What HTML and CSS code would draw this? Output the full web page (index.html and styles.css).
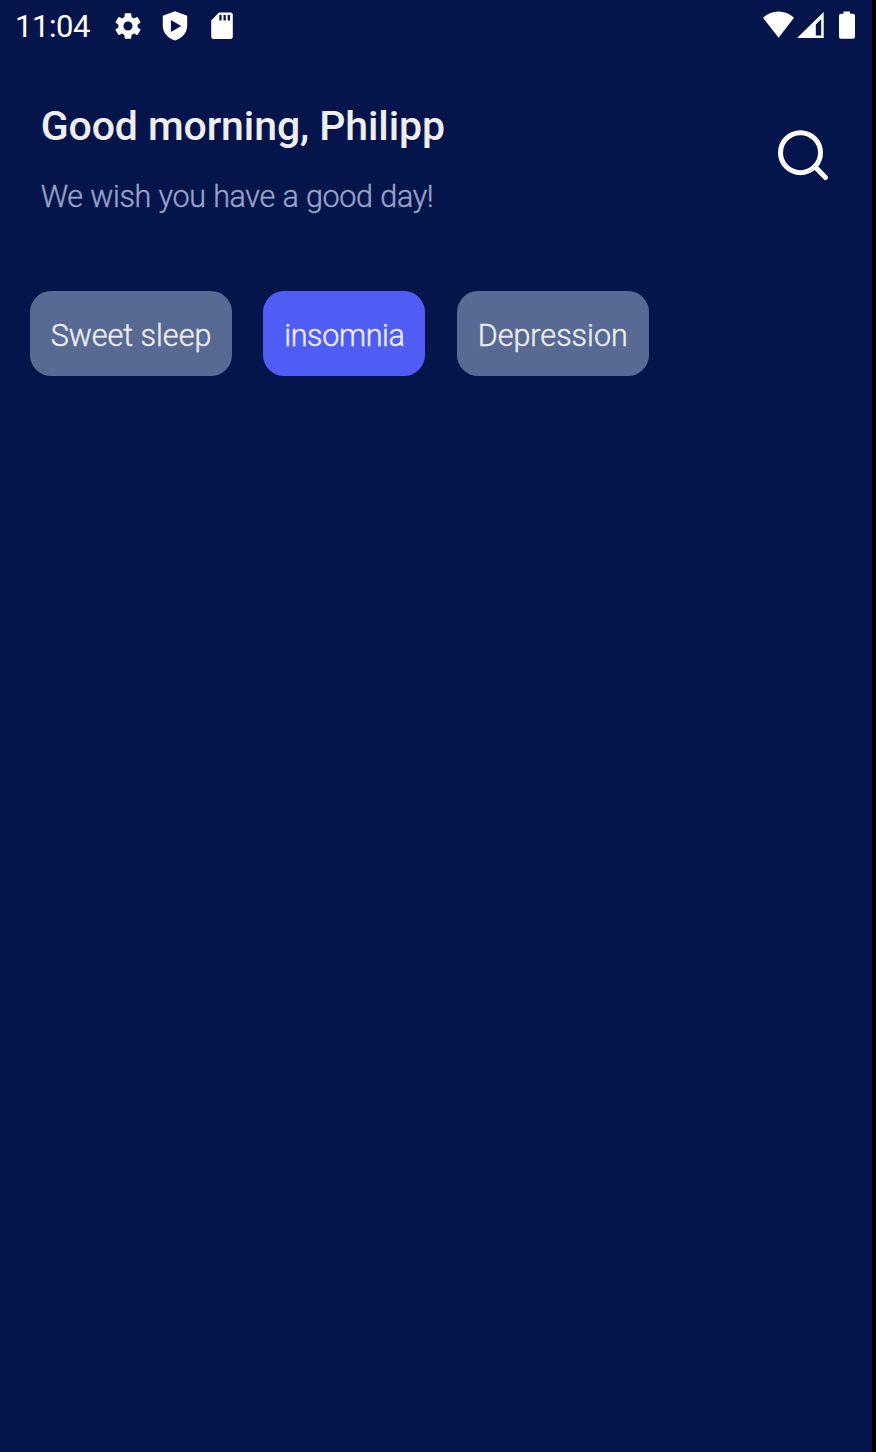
FILE: index.html
```html
<!DOCTYPE html>
<html lang="en">
<head>
<meta charset="utf-8">
<title>Good morning</title>
<link rel="stylesheet" href="styles.css">
</head>
<body>
<main class="screen">
  <div class="status">
    <span class="clock">11:04</span>
    <svg class="gear" width="32" height="32" viewBox="0 0 24 24"><path d="M19.14 12.94c.04-.3.06-.61.06-.94 0-.32-.02-.64-.07-.94l2.03-1.58c.18-.14.23-.41.12-.61l-1.92-3.32c-.12-.22-.37-.29-.59-.22l-2.39.96c-.5-.38-1.03-.7-1.62-.94l-.36-2.54c-.04-.24-.24-.41-.48-.41h-3.84c-.24 0-.43.17-.47.41l-.36 2.54c-.59.24-1.13.57-1.62.94l-2.39-.96c-.22-.08-.47 0-.59.22L2.74 8.87c-.12.21-.08.47.12.61l2.03 1.58c-.05.3-.09.63-.09.94s.02.64.07.94l-2.03 1.58c-.18.14-.23.41-.12.61l1.92 3.32c.12.22.37.29.59.22l2.39-.96c.5.38 1.03.7 1.62.94l.36 2.54c.05.24.24.41.48.41h3.84c.24 0 .44-.17.47-.41l.36-2.54c.59-.24 1.13-.56 1.62-.94l2.39.96c.22.08.47 0 .59-.22l1.92-3.32c.12-.22.07-.47-.12-.61zM12 15.400A3.400 3.400 0 1 1 12 8.600a3.400 3.400 0 0 1 0 6.800z"/></svg>
    <svg class="shield" width="26" height="30" viewBox="0 0 26 30"><path fill-rule="evenodd" d="M13 .2 25.200 4.700v9.800C25.200 22 20 27.500 13 29.500 6 27.500 .8 22 .8 14.500V4.700zM8.900 9v12L19.200 15z"/></svg>
    <svg class="card" width="22" height="28" viewBox="0 0 22 28"><path fill-rule="evenodd" d="M8 .5h11.500A2.300 2.300 0 0 1 21.800 2.800v21.900A2.300 2.300 0 0 1 19.500 27H2.500A2.300 2.300 0 0 1 .2 24.700V8.500zM8.300 3v5.500h2.300V3zm4.200 0v5.500h2.300V3zm4.200 0v5.500H19V3z"/></svg>
    <svg class="signals" width="96" height="30" viewBox="0 0 96 30"><path d="M3 7.800C12-.5 25-.5 34 7.800L18.600 27.800z"/><path fill-rule="evenodd" d="M63.700 1.900v26.100H37zM61.200 9.300l-5.400 5.300v10.800h5.400z"/><path d="M83.500 1.500h6.500v2.200h3a2 2 0 0 1 2 2v21.100a2 2 0 0 1-2 2H81a2 2 0 0 1-2-2V5.700a2 2 0 0 1 2-2h2.500z"/></svg>
  </div>
  <header class="header">
    <div>
      <h1 class="title">Good morning, Philipp</h1>
      <p class="subtitle">We wish you have a good day!</p>
    </div>
    <svg class="search" width="54" height="54" viewBox="0 0 54 54"><circle cx="24.500" cy="24.700" r="20"/><path d="M39 38.700 49.500 49.500"/></svg>
  </header>
  <nav class="chips">
    <span class="chip sleep">Sweet sleep</span>
    <span class="chip insomnia">insomnia</span>
    <span class="chip depression">Depression</span>
  </nav>
</main>
</body>
</html>
```
FILE: styles.css
```css
body {
  margin: 0;
  background: #000;
  font-family: Roboto, "Noto Sans", sans-serif;
}
.screen {
  width: 872px;
  height: 1452px;
  background: #05144b;
  overflow: hidden;
}
.status {
  display: flex;
  align-items: flex-start;
  height: 54px;
  padding-left: 15px;
  color: #fff;
}
.status svg { fill: #fff; flex: none; }
.clock {
  width: 97px;
  padding-top: 9px;
  font-size: 31px;
  line-height: 36px;
  letter-spacing: -0.45px;
}
.gear { margin-top: 10px; }
.shield { margin: 11px 0 0 18px; }
.card { margin: 12px 0 0 23px; }
.signals { margin: 10px 16px 0 auto; }
.header {
  display: flex;
  justify-content: space-between;
  align-items: flex-start;
  height: 237px;
  padding: 0 42px 0 40.700px;
  box-sizing: border-box;
}
.title {
  margin: 47px 0 0;
  font-size: 41px;
  font-weight: 500;
  line-height: 50px;
  letter-spacing: -0.1px;
  color: #eee;
  white-space: nowrap;
}
.subtitle {
  margin: 26px 0 0;
  font-size: 30.5px;
  font-weight: 300;
  line-height: 40px;
  letter-spacing: -0.35px;
  word-spacing: 0.5px;
  color: #98a3c7;
  -webkit-text-stroke: 0.4px #98a3c7;
  white-space: nowrap;
}
.search {
  margin-top: 74px;
  fill: none;
  stroke: #fff;
  stroke-width: 5;
  stroke-linecap: round;
}
.chips {
  display: flex;
  gap: 31.500px;
  padding: 0.300px 0 0 29.700px;
}
.chip {
  box-sizing: border-box;
  height: 85px;
  padding-left: 21px;
  border-radius: 21px;
  background: #586a94;
  color: #eee;
  font-size: 30.5px;
  font-weight: 300;
  line-height: 90px;
  -webkit-text-stroke: 0.4px #eee;
  white-space: nowrap;
}
.sleep { width: 202px; }
.insomnia { width: 162px; background: #505df5; letter-spacing: -0.35px; }
.depression { width: 192px; }
```
